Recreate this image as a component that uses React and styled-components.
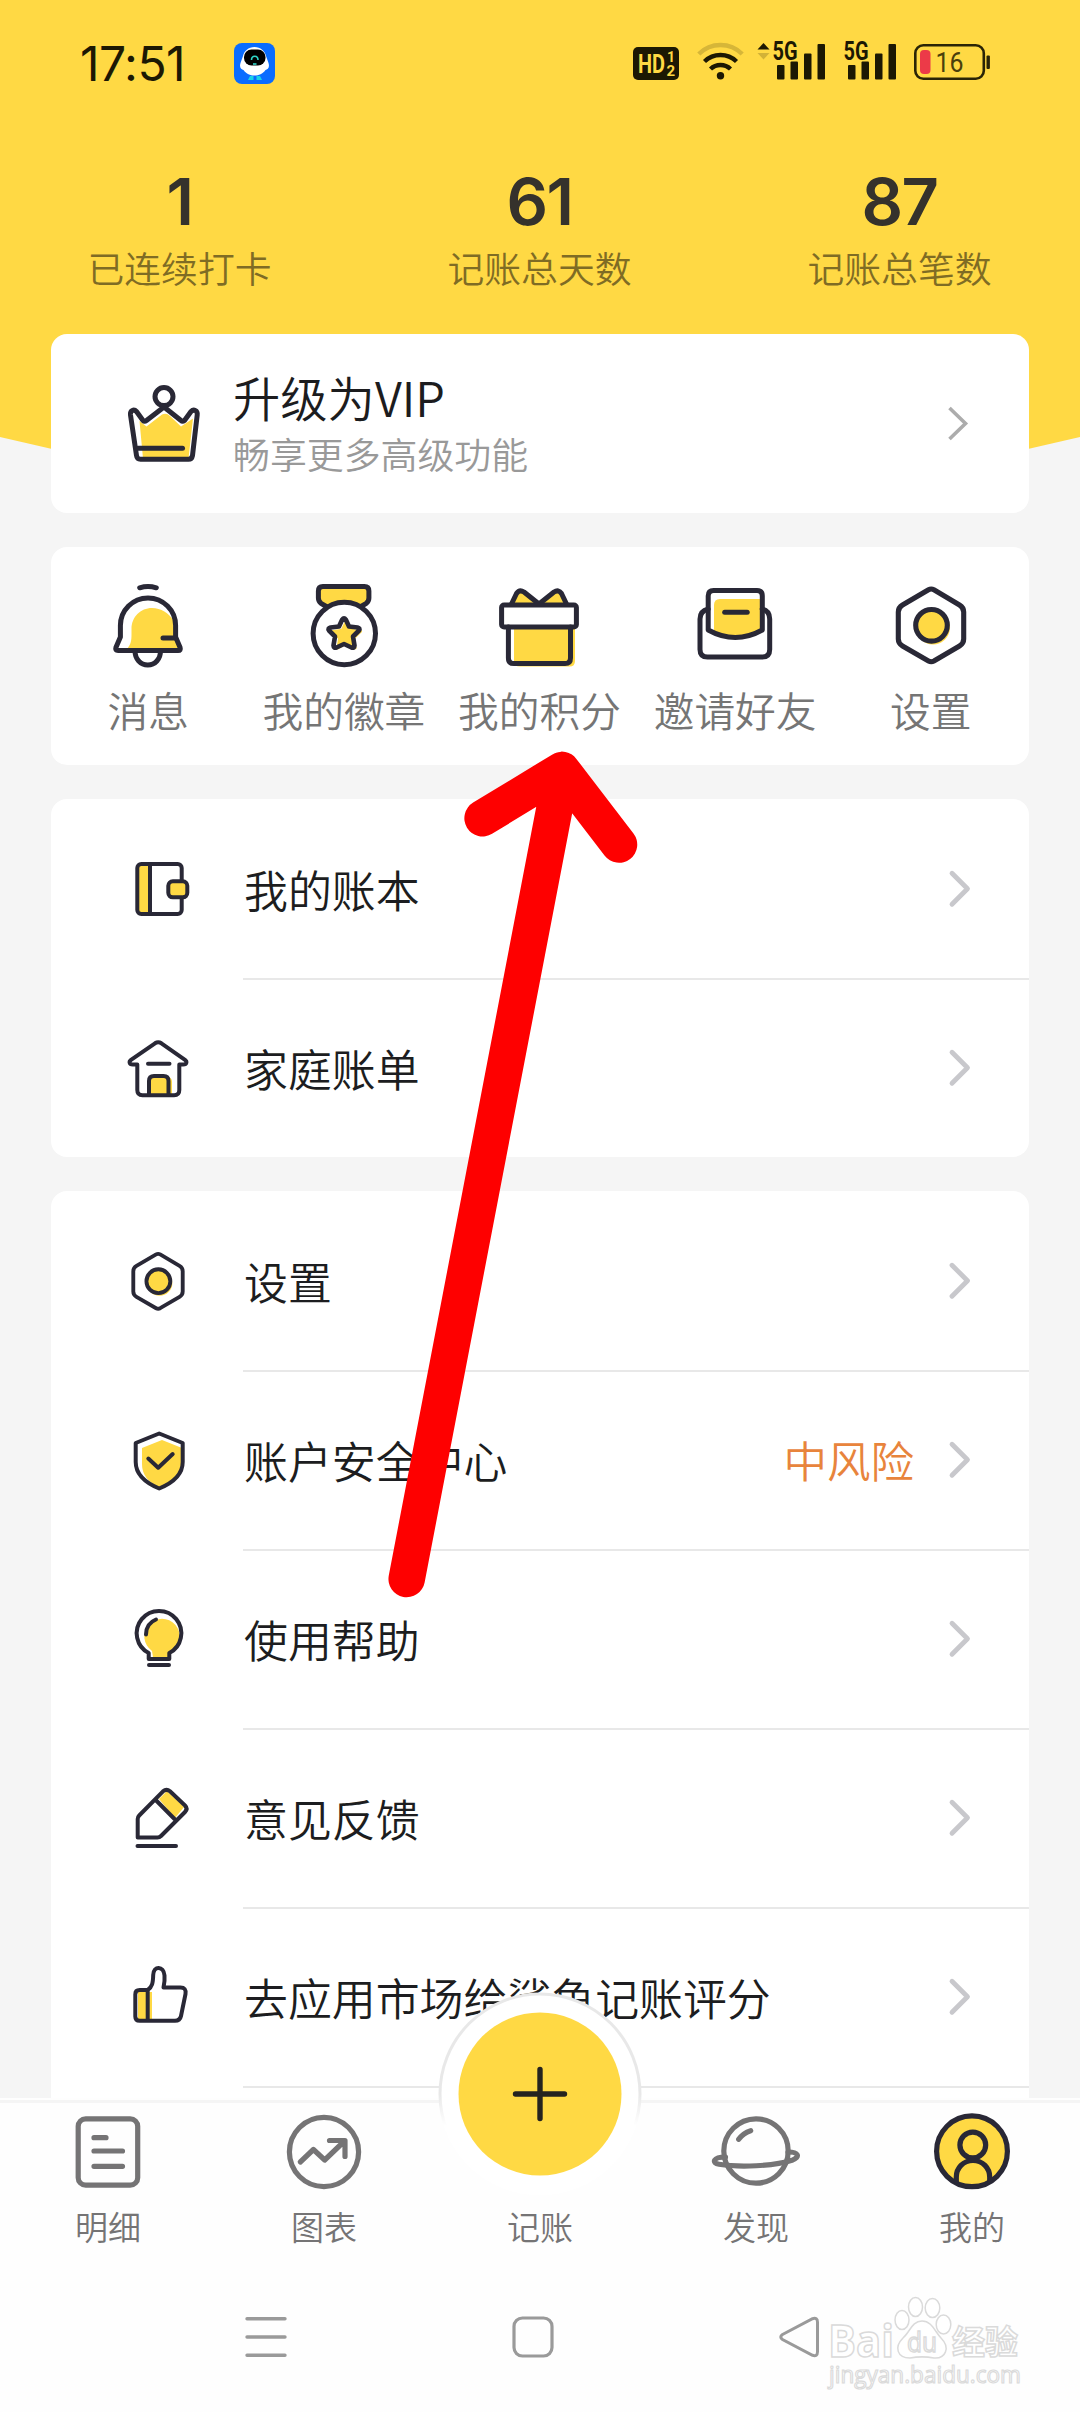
import React from 'react';
import styled, { createGlobalStyle } from 'styled-components';

const YELLOW = '#ffd944';
const INK = '#292836';
const GREY = '#757475';

const rounded = { strokeLinecap: 'round', strokeLinejoin: 'round' };

/* ---------- status bar icons ---------- */

const RobotIcon = () => (
  <svg width="41" height="41" viewBox="0 0 41 41">
    <rect width="41" height="41" rx="8" fill="#0a6cff" />
    <path d="M20.500 4c6 0 10.500 4 11.500 9l2.500 7c1.500 5-1 6.500-3 7-3 4-6.500 5.500-11 5.500S12.500 31 9.500 27c-2-.5-4.500-2-3-7L9 13c1-5 5.500-9 11.500-9z" fill="#fff" />
    <rect x="10" y="6.500" width="21.500" height="16" rx="7.500" fill="#000" />
    <path d="M17.500 17c0-5 6.500-5 6.500 0" fill="none" stroke="#2fd6c8" strokeWidth="1.600" />
    <path d="M19 21h3.500" stroke="#2fd6c8" strokeWidth="1.600" />
    <path d="M16 33h3.500v4H14zM22.500 33H26l2 4h-5.500z" fill="#19d3e6" />
  </svg>
);

const HdIcon = () => (
  <svg width="46" height="33" viewBox="0 0 46 33">
    <rect width="46" height="33" rx="5" fill="#1c1803" />
    <SvgLabel x="5" y="26" textLength="27" lengthAdjust="spacingAndGlyphs" $size={26} $color={YELLOW}>HD</SvgLabel>
    <SvgLabel x="34" y="15" $size={14} $color={YELLOW}>1</SvgLabel>
    <SvgLabel x="33.500" y="29" $size={15} $color={YELLOW}>2</SvgLabel>
  </svg>
);

const WifiIcon = () => (
  <svg width="47" height="42" viewBox="0 0 47 42">
    <g fill="none" stroke="#1c1803" strokeWidth="4.400">
      <path d="M1.800 12a30.500 30.500 0 0 1 43.400 0" opacity=".18" />
      <path d="M7.500 19.500a23 23 0 0 1 32 0" />
      <path d="M13.500 27a14.500 14.500 0 0 1 20 0" />
    </g>
    <circle cx="23.500" cy="33.800" r="3.700" fill="#1c1803" />
  </svg>
);

const SignalIcon = ({ arrows }) => (
  <svg width={arrows ? 68 : 53} height="42" viewBox={arrows ? '0 0 68 42' : '15 0 53 42'}>
    {arrows && <path d="M.5 7.500L6.500 1l6 6.500z" fill="#1c1803" />}
    {arrows && <path d="M.5 11h12l-6 6.500z" fill="#1c1803" opacity=".2" />}
    <SvgLabel x="15.500" y="18" textLength="25" lengthAdjust="spacingAndGlyphs" $size={25} $color="#1c1803">5G</SvgLabel>
    <g fill="#1c1803">
      <rect x="20" y="23" width="7.500" height="14.500" rx="1" />
      <rect x="33.500" y="19.500" width="7.500" height="18" rx="1" />
      <rect x="47" y="11.500" width="7.500" height="26" rx="1" />
      <rect x="60.500" y="2" width="7.500" height="35.500" rx="1" />
    </g>
  </svg>
);

const BatteryIcon = () => (
  <svg width="76" height="38" viewBox="0 0 76 38">
    <rect x="1.300" y="1.300" width="68.500" height="33.400" rx="8" fill="none" stroke="#2a2406" strokeWidth="2.600" />
    <rect x="6" y="6" width="10.500" height="24" rx="4" fill="#ec3a48" />
    <rect x="72.500" y="11.500" width="3.400" height="13.500" rx="1" fill="#2a2406" />
    <SvgLabel x="21.500" y="27.500" textLength="28" lengthAdjust="spacingAndGlyphs" $size={27} $weight={400} $color="#4a3f0c">16</SvgLabel>
  </svg>
);

/* ---------- card icons ---------- */

const CardSvg = ({ children }) => (
  <svg width="90" height="90" viewBox="0 0 90 90" fill="none" stroke={INK} strokeWidth="5" {...rounded}>
    {children}
  </svg>
);

const CrownIcon = () => (
  <CardSvg>
    <path d="M20.500 42l7 5.500L43 35.500q4.500-2 8 1.500l11 10.500 12-8-4.500 40H24z" fill={YELLOW} stroke="none" />
    <circle cx="45" cy="17.600" r="9" />
    <path d="M11.500 36c-.6-5 3.600-6 6-3.500l6.500 9q1.500 1.500 3.500 0L45 28l17 13.500q1.500 1.500 3.500 0l6.500-9c2.500-2.500 6.800-1.500 6.200 3.500l-4.700 40.500q-.7 3.800-4 3.800h-48q-3.500 0-4-3.800z" />
    <path d="M19 69.300h44.500" />
  </CardSvg>
);

const BellIcon = () => (
  <CardSvg>
    <path d="M24 69c4-5 4.500-8 4.500-15v-5c0-12 9-21 20.500-21 9 0 17 5 21 12l2 17 4 12z" fill={YELLOW} stroke="none" />
    <path d="M36.700 7.800q8.300-2.600 16.600 0" />
    <path d="M17.400 57V45.600a27.600 27.600 0 0 1 55.200 0V57l4.500 10.500q1 3-2 3h-60q-3.200 0-2.200-3z" />
    <path d="M60 58h12M32 71c0 8 5.500 14 12.800 14s12.700-6 12.700-14" />
  </CardSvg>
);

const MedalIcon = () => (
  <CardSvg>
    <path d="M29 27.500l-7-4.200q-2.600-2-2.600-5.300v-7q0-4.500 4.500-4.500h41.500q4.500 0 4.500 4.500v7q0 3.300-2.600 5.300l-7 4.200q-15.500-9-31.300 0z" fill={YELLOW} />
    <circle cx="45.300" cy="53.500" r="31.200" fill="#fff" />
    <path transform="translate(47.500 56)" d="M0-15L4.400-6.100 14.300-4.600 7.100 2.300 8.800 12.100 0 7.500-8.800 12.100-7.100 2.300-14.300-4.600-4.400-6.100z" fill={YELLOW} stroke={YELLOW} strokeWidth="2.500" />
    <path transform="translate(45 54)" d="M-1.800-14.500q1.800-2.500 3.600 0l3.200 7 8.500 1q3 .8 1.500 3L9 2.500l1.500 9q-.2 3-3 2L0 10l-7.500 3.500q-2.800 1-3-2l1.500-9L-15-3.500q-1.500-2.200 1.500-3l8.500-1z" strokeWidth="4.600" />
  </CardSvg>
);

const GiftIcon = () => (
  <CardSvg>
    <path d="M20 48h61v33q0 5.500-5.500 5.500H26q-6 0-6-6zM17 25l7-13q3-3 6 0l15 12 15-12q3-3 6 0l7 13z" fill={YELLOW} stroke="none" />
    <path d="M17 25l5.500-11.500q3-4.500 7.500-1.500L45 24l15-12q4.500-3 7.500 1.500L73 25" />
    <rect x="7.600" y="25" width="74.800" height="22" rx="2.500" fill="#fff" />
    <path d="M14.400 47v31q0 5.600 5.600 5.600h51q5.500 0 5.500-5.600V47" />
  </CardSvg>
);

const InviteIcon = () => (
  <CardSvg>
    <path d="M24 52V25q0-6 6-6h42v32q-12 8-27 8-12 0-21-7z" fill={YELLOW} stroke="none" />
    <path d="M18.200 29q-8.200 2-8.200 10v30.500q0 7.500 7.500 7.500h54.700q7.500 0 7.500-7.500V39q0-8-7.500-10" />
    <path d="M18.200 50V16q0-5.400 5.400-5.400H67q5.300 0 5.300 5.400v34q-27 15-54.100 0z" />
    <path d="M34.700 32.300h22.500" />
  </CardSvg>
);

const HexIcon = ({ size = 90 }) => (
  <svg width={size} height={size} viewBox="0 0 90 90">
    <circle cx="47" cy="47.500" r="17" fill={YELLOW} />
    <g fill="none" stroke={INK} strokeWidth="5.100">
      <path d="M42.500 9.800q2.700-1.500 5.400 0L73.500 25q4.200 2.500 4.200 7v27q0 4.500-4.200 7L47.900 81q-2.700 1.500-5.400 0L16.500 66q-4.200-2.500-4.200-7V32q0-4.500 4.200-7z" />
      <circle cx="45.500" cy="45.300" r="15.800" />
    </g>
  </svg>
);

/* ---------- list icons ---------- */

const ListSvg = ({ children }) => (
  <svg width="70" height="70" viewBox="0 0 70 70" fill="none" stroke={INK} strokeWidth="4" {...rounded}>
    {children}
  </svg>
);

const BookIcon = () => (
  <ListSvg>
    <rect x="15" y="11" width="12" height="49" fill={YELLOW} stroke="none" />
    <rect x="14.300" y="10" width="44.400" height="50" rx="4" />
    <path d="M27 10v50" />
    <rect x="45.300" y="27.300" width="19" height="16" rx="4.500" fill={YELLOW} />
  </ListSvg>
);

const HouseIcon = () => (
  <ListSvg>
    <path d="M27 62V49q0-5 5-5h12q5 0 5 5v13z" fill={YELLOW} stroke="none" />
    <path d="M14.300 31.500h-4.500c-3.800 0-4-3-1.800-4.700L32 10.300q3.200-2 6.400 0L62 26.800c2.200 1.700 2 4.700-1.800 4.700h-3.900V57q0 5.200-5.200 5.200H19.500q-5.200 0-5.200-5.200z" />
    <path d="M25 30.700h21.500M26 62V48q0-5 5-5h9.500q5 0 5 5v14" />
  </ListSvg>
);

const ShieldIcon = () => (
  <ListSvg>
    <path d="M19 23l20-8 20 8v16c0 10-9 18-22 24-12-6-18-13-18-24z" fill={YELLOW} stroke="none" />
    <path d="M36.200 8.500l23.500 9.500v19c0 12.500-9 20.500-23.500 26.500-14.500-6-23.500-14-23.500-26.500V18zM25.300 33.500l9.900 9.200L49.700 29" />
  </ListSvg>
);

const BulbIcon = () => (
  <ListSvg>
    <path d="M30 53l-1-6a17.700 17.700 0 1 1 20 0l-2 6z" fill={YELLOW} stroke="none" />
    <path d="M25.700 55v-6A22.300 22.300 0 1 1 46.300 49v6zM26 61h20M23 30.500q0-11 10-15" />
  </ListSvg>
);

const PencilIcon = () => (
  <ListSvg>
    <path d="M36 16l8-8 17 16-9 11z" fill={YELLOW} stroke="none" />
    <path d="M14.700 54.500V36q0-2 1.500-3.500L40 8.300q3.500-3 7 0L62 22.500q3.200 3.300 0 6.500L38 53q-1.500 1.500-3.500 1.500zM32.700 17L52 36.500M14.500 63h38.500" />
  </ListSvg>
);

const ThumbIcon = () => (
  <ListSvg>
    <path d="M15 30h14v28H15z" fill={YELLOW} stroke="none" />
    <path d="M24.700 28h-8q-4.400 0-4.400 4.400v22q0 4.300 4.400 4.300H52q5 0 6-4.700L62.500 32q1-6.500-5-6.500H40.500q1.500-6.500 1-12c-.8-10-11-10-11.300-.5-.2 8-1 12-5.500 15zM24.700 28v30" />
  </ListSvg>
);

/* ---------- tab bar icons ---------- */

const TabSvg = ({ children, stroke = GREY }) => (
  <svg width="90" height="90" viewBox="0 0 90 90" fill="none" stroke={stroke} strokeWidth="5.200" {...rounded}>
    {children}
  </svg>
);

const DetailIcon = () => (
  <TabSvg>
    <rect x="15.200" y="11.800" width="59.500" height="66.400" rx="7.500" />
    <path d="M31 30.700h12M31 44h28.500M31 59.300h28.500" />
  </TabSvg>
);

const ChartIcon = () => (
  <TabSvg>
    <circle cx="45" cy="45" r="34.600" />
    <path d="M21.300 55l13.100-12.500L45.700 53 65 34.500M50.500 33.500H66v16" />
  </TabSvg>
);

const PlanetIcon = () => (
  <TabSvg>
    <circle cx="45" cy="44" r="32.200" />
    <path d="M14.500 50C2 50 .5 56 8 57.300c20 3.200 55 2 73-4 9-3.500 6-8.300-4-8.300M27.700 32.300q4.500-6.300 12-8.600" />
  </TabSvg>
);

const MineIcon = () => (
  <TabSvg stroke={INK}>
    <circle cx="45" cy="44.300" r="35.400" fill={YELLOW} />
    <circle cx="45.800" cy="38" r="12.900" />
    <path d="M29.300 74v-4c0-9 7-16.500 16.700-16.500S62.700 61 62.700 70v4" />
  </TabSvg>
);

const PlusButton = () => (
  <svg width="206" height="206" viewBox="0 0 206 206">
    <defs>
      <linearGradient id="ringFade" x1="0" y1="0" x2="0" y2="1">
        <stop offset=".5" stopColor="#e8e8e8" />
        <stop offset=".66" stopColor="#fff" />
      </linearGradient>
    </defs>
    <circle cx="103" cy="103" r="100" fill="#fff" stroke="url(#ringFade)" strokeWidth="3" />
    <circle cx="103" cy="103" r="81.500" fill={YELLOW} />
    <path d="M78.500 103h49M103 78.500v49" stroke="#25231f" strokeWidth="5.400" strokeLinecap="round" />
  </svg>
);

/* ---------- data ---------- */

const stats = [
  { value: '1', label: '已连续打卡' },
  { value: '61', label: '记账总天数' },
  { value: '87', label: '记账总笔数' },
];

const shortcuts = [
  { label: '消息', icon: <BellIcon /> },
  { label: '我的徽章', icon: <MedalIcon /> },
  { label: '我的积分', icon: <GiftIcon /> },
  { label: '邀请好友', icon: <InviteIcon /> },
  { label: '设置', icon: <HexIcon /> },
];

const books = [
  { label: '我的账本', icon: <BookIcon /> },
  { label: '家庭账单', icon: <HouseIcon /> },
];

const settings = [
  { label: '设置', icon: <HexIcon size={68} /> },
  { label: '账户安全中心', icon: <ShieldIcon />, note: '中风险' },
  { label: '使用帮助', icon: <BulbIcon /> },
  { label: '意见反馈', icon: <PencilIcon /> },
  { label: '去应用市场给鲨鱼记账评分', icon: <ThumbIcon /> },
];

const tabs = [
  { label: '明细', icon: <DetailIcon /> },
  { label: '图表', icon: <ChartIcon /> },
  { label: '记账', main: true },
  { label: '发现', icon: <PlanetIcon /> },
  { label: '我的', icon: <MineIcon /> },
];

const List = ({ items, open }) => (
  <ListCard $open={open}>
    {items.map((item) => (
      <Row key={item.label}>
        <RowIcon>{item.icon}</RowIcon>
        <RowBody>
          <RowLabel>{item.label}</RowLabel>
          {item.note && <RowNote>{item.note}</RowNote>}
          <svg width="24" height="40" viewBox="0 0 24 40">
            <path d="M4 4.200L19.500 19.700 4 35.200" fill="none" stroke="#c8c8cc" strokeWidth="4.800" {...rounded} />
          </svg>
        </RowBody>
      </Row>
    ))}
    {open && <Row />}
  </ListCard>
);

const Watermark = () => (
  <WatermarkSvg width="200" height="100" viewBox="0 0 200 100">
    <g fill="#fff" stroke="#dadada" strokeWidth="1.500">
      <text x="2" y="61" fontSize="45" fontWeight="700" textLength="66" lengthAdjust="spacingAndGlyphs">Bai</text>
      <ellipse cx="76" cy="24" rx="7" ry="9.500" />
      <ellipse cx="89.500" cy="11" rx="7" ry="9.500" />
      <ellipse cx="106.500" cy="12" rx="7.300" ry="9.500" />
      <ellipse cx="117.500" cy="28.500" rx="7.300" ry="9.500" />
      <path d="M96 25c10 0 13 11 19 17 10 10 4 21-7 20-8-1.500-16-1.500-24 0-13 0-16-11-7-20 7-6 9-17 19-17z" />
      <text x="81" y="56" fontSize="27" textLength="30" lengthAdjust="spacingAndGlyphs">du</text>
      <text x="126" y="58" fontSize="33" fontWeight="700">经验</text>
      <text x="3" y="86.500" fontSize="24" strokeWidth="1.200" textLength="192" lengthAdjust="spacingAndGlyphs">jingyan.baidu.com</text>
    </g>
  </WatermarkSvg>
);

const App = () => (
  <Screen>
    <GlobalStyle />
    <Backdrop />
    <StatusBar>
      <Clock>17:51</Clock>
      <RobotIcon />
      <StatusIcons>
        <HdIcon />
        <WifiIcon />
        <SignalIcon arrows />
        <SignalIcon />
        <BatteryIcon />
      </StatusIcons>
    </StatusBar>
    <Stats>
      {stats.map((stat) => (
        <Stat key={stat.label}>
          <StatValue>{stat.value}</StatValue>
          <StatLabel>{stat.label}</StatLabel>
        </Stat>
      ))}
    </Stats>
    <Content>
      <VipCard>
        <CrownIcon />
        <VipText>
          <VipTitle>升级为VIP</VipTitle>
          <VipHint>畅享更多高级功能</VipHint>
        </VipText>
        <svg width="24" height="40" viewBox="0 0 24 40">
          <path d="M3.500 4L19.500 19.500l-16 15.500" fill="none" stroke="#acacac" strokeWidth="3.600" />
        </svg>
      </VipCard>
      <ShortcutCard>
        {shortcuts.map((item) => (
          <Shortcut key={item.label}>
            {item.icon}
            <ShortcutLabel>{item.label}</ShortcutLabel>
          </Shortcut>
        ))}
      </ShortcutCard>
      <List items={books} />
      <List items={settings} open />
    </Content>
    <TabBar>
      {tabs.map((tab) => (
        <Tab key={tab.label}>
          <TabIcon>{tab.main ? <MainAction><PlusButton /></MainAction> : tab.icon}</TabIcon>
          <TabLabel>{tab.label}</TabLabel>
        </Tab>
      ))}
    </TabBar>
    <NavBar>
      <svg width="42" height="42" viewBox="0 0 42 42" fill="none" stroke="#9a9a9a" strokeWidth="3.400" strokeLinecap="round">
        <path d="M2 2.700h38M2 21h38M2 39.300h38" />
      </svg>
      <svg width="42" height="42" viewBox="0 0 42 42" fill="none" stroke="#9a9a9a" strokeWidth="3.200">
        <rect x="2" y="2" width="38" height="38" rx="8.500" />
      </svg>
      <svg width="42" height="42" viewBox="0 0 42 42" fill="none" stroke="#9a9a9a" strokeWidth="3">
        <path d="M3.500 18.500L33.500 2.700q5-1.500 5 3.500v29.600q0 5-5 3.500L3.500 23.500q-3.500-2.500 0-5z" />
      </svg>
    </NavBar>
    <Watermark />
    <Pointer width="1080" height="2412" viewBox="0 0 1080 2412">
      <path d="M406.700 1579L561.900 770M482.600 818.200L561.900 770 619 844.500" />
    </Pointer>
  </Screen>
);

export default App;

const GlobalStyle = createGlobalStyle`
  * {
    box-sizing: border-box;
  }
  body {
    margin: 0;
    font-family: 'Noto Sans CJK SC', sans-serif;
    font-weight: 350;
  }
  svg {
    display: block;
    flex-shrink: 0;
    overflow: visible;
  }
`;

const Screen = styled.div`
  position: relative;
  display: flex;
  flex-direction: column;
  width: 1080px;
  height: 2412px;
  overflow: hidden;
  background: #f5f5f5;
`;

const Backdrop = styled.div`
  position: absolute;
  top: 0;
  left: 0;
  width: 1080px;
  height: 500px;
  background: ${YELLOW};
  clip-path: polygon(0 0, 100% 0, 100% 437px, 1029px 448.700px, 900px 478px, 180px 478px, 51px 448.700px, 0 437px);
`;

const SvgLabel = styled.text`
  font-family: Roboto, 'Liberation Sans', sans-serif;
  font-size: ${({ $size }) => $size}px;
  font-weight: ${({ $weight }) => $weight || 700};
  fill: ${({ $color }) => $color};
`;

const StatusBar = styled.div`
  position: relative;
  display: flex;
  align-items: center;
  height: 126px;
  padding: 0 90px 0 80px;
`;

const Clock = styled.div`
  width: 154px;
  font-family: Inter, sans-serif;
  font-size: 48px;
  font-weight: 400;
  letter-spacing: -0.500px;
  color: #1c1803;
`;

const StatusIcons = styled.div`
  display: flex;
  align-items: center;
  gap: 18px;
  margin-left: auto;

  svg:nth-child(3) {
    margin-left: -5px;
  }
`;

const Stats = styled.div`
  position: relative;
  display: flex;
  height: 208px;
`;

const Stat = styled.div`
  display: flex;
  flex: 1;
  flex-direction: column;
  align-items: center;
  padding: 36px 1px 0 0;
`;

const StatValue = styled.div`
  font-family: Inter, sans-serif;
  font-size: 65px;
  font-weight: 600;
  line-height: 80px;
  letter-spacing: -1.500px;
  color: #35322c;
`;

const StatLabel = styled.div`
  font-size: 36.800px;
  line-height: 51px;
  color: #7f6c24;
`;

const Content = styled.div`
  position: relative;
  display: flex;
  flex: 1;
  flex-direction: column;
  gap: 34px;
  min-height: 0;
  overflow: hidden;
  padding: 0 51px;
`;

const Card = styled.div`
  flex-shrink: 0;
  border-radius: 16px;
  background: #fff;
`;

const VipCard = styled(Card)`
  display: flex;
  align-items: center;
  height: 179px;
  padding: 0 59px 0 68px;
`;

const VipText = styled.div`
  flex: 1;
  padding: 1px 0 0 24px;
`;

const VipTitle = styled.div`
  font-size: 47.300px;
  line-height: 58px;
  color: #1c1c1e;
`;

const VipHint = styled.div`
  font-size: 36.900px;
  line-height: 54px;
  color: #999;
`;

const ShortcutCard = styled(Card)`
  display: flex;
  height: 218px;
  padding-top: 33px;
`;

const Shortcut = styled.div`
  display: flex;
  flex: 1;
  flex-direction: column;
  align-items: center;
  padding-right: 1px;
`;

const ShortcutLabel = styled.div`
  padding-top: 10px;
  font-size: 40.700px;
  line-height: 60px;
  white-space: nowrap;
  color: #757575;
`;

const ListCard = styled(Card)`
  border-radius: ${({ $open }) => ($open ? '16px 16px 0 0' : '16px')};
`;

const Row = styled.div`
  display: flex;
  height: 179px;

  & + & {
    background: linear-gradient(#e8e8e8, #e8e8e8) 192px 0 / 100% 2px no-repeat;
  }
`;

const RowIcon = styled.div`
  display: flex;
  align-items: center;
  justify-content: center;
  width: 192px;
  padding-left: 22px;
`;

const RowBody = styled.div`
  display: flex;
  flex: 1;
  align-items: center;
  padding-right: 57px;
`;

const RowLabel = styled.div`
  flex: 1;
  padding-left: 1px;
  font-size: 43.900px;
  line-height: 60px;
  color: #1c1d20;
`;

const RowNote = styled.div`
  margin-right: 34px;
  font-size: 43.500px;
  line-height: 60px;
  color: #e8843c;
`;

const TabBar = styled.div`
  position: relative;
  display: flex;
  flex-shrink: 0;
  height: 172px;
  padding-top: 9px;
  background: linear-gradient(#f5f5f5, #f5f5f5) 0 2px / 100% 3px no-repeat #fefefe;
`;

const Tab = styled.div`
  display: flex;
  flex: 1;
  flex-direction: column;
  align-items: center;
`;

const TabIcon = styled.div`
  position: relative;
  width: 90px;
  height: 90px;
`;

const MainAction = styled.div`
  position: absolute;
  top: -116px;
  left: -58.500px;
`;

const TabLabel = styled.div`
  padding-top: 4px;
  font-size: 33px;
  line-height: 50px;
  color: ${GREY};
`;

const NavBar = styled.div`
  display: flex;
  flex-shrink: 0;
  justify-content: space-between;
  height: 142px;
  padding: 46px 259px 0 245px;
  background: #fefefe;
`;

const WatermarkSvg = styled.svg`
  position: absolute;
  top: 2296px;
  left: 826px;
  font-family: 'Open Sans', 'Noto Sans CJK SC', sans-serif;
  font-weight: 400;
`;

const Pointer = styled.svg`
  position: absolute;
  top: 0;
  left: 0;
  fill: none;
  stroke: #fe0000;
  stroke-width: 36.500px;
  stroke-linecap: round;
  stroke-linejoin: round;
`;
